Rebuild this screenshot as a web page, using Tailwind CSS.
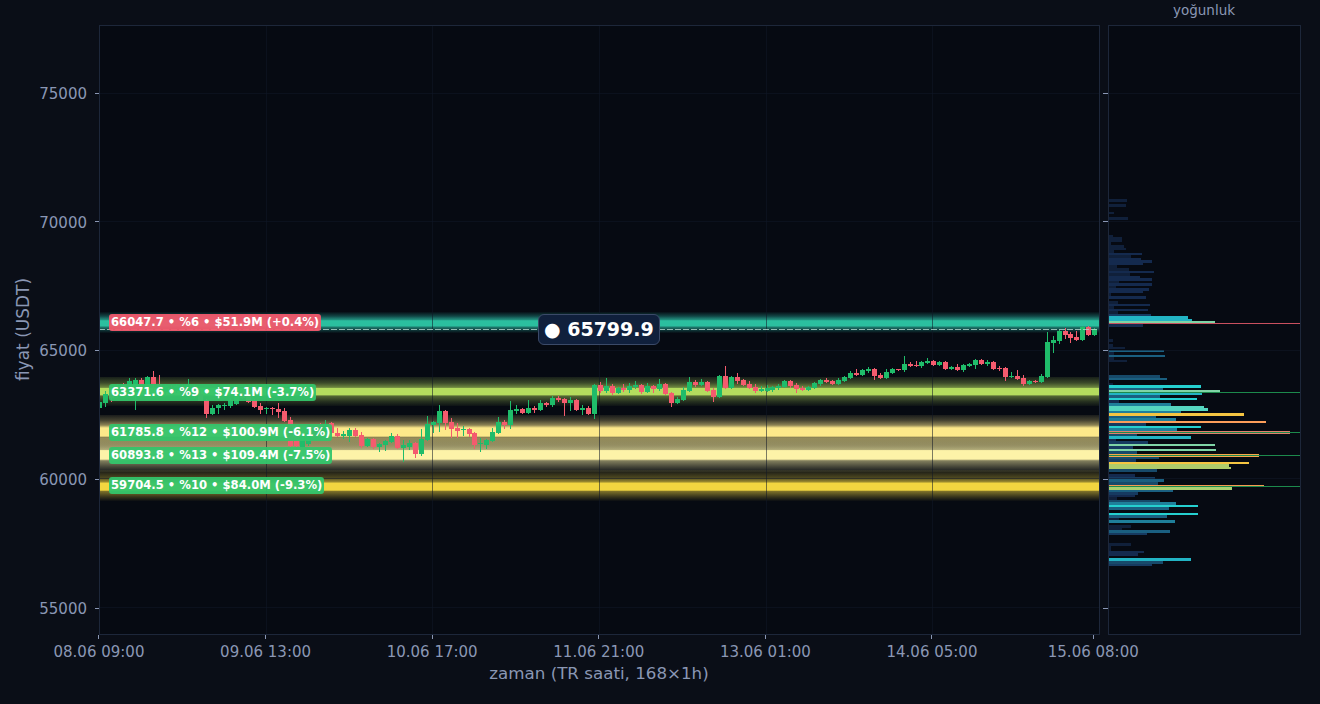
<!DOCTYPE html>
<html lang="tr">
<head>
    <meta charset="UTF-8">
    <title>fiyat yoğunluk</title>
    <script src="https://cdn.jsdelivr.net/npm/@tailwindcss/browser@4"></script>
</head>
<body class="bg-[#0a0e17] font-['DejaVu_Sans',sans-serif] text-[#8a97b4] overflow-hidden">
<div class="w-[1320px] h-[704px] flex flex-col">
    <!-- density title -->
    <div class="h-[25px] pl-[1108px]">
        <div class="w-[192px] text-center text-[13.5px] leading-[21px]">yoğunluk</div>
    </div>

    <div class="flex h-[610px]">
        <!-- y axis -->
        <div class="w-[99px] flex">
            <div class="w-[48px] flex items-center justify-center">
                <span class="-rotate-90 whitespace-nowrap text-[17px] leading-none pl-[2px]">fiyat (USDT)</span>
            </div>
            <div class="w-[51px] pt-[58px] pb-[17px] flex flex-col justify-between items-end">
                <div class="h-5 flex items-center gap-[8px] text-[15px]"><span class="translate-y-px">75000</span><i class="w-[4px] h-px bg-[#8a97b4]"></i></div>
                <div class="h-5 flex items-center gap-[8px] text-[15px]"><span class="translate-y-px">70000</span><i class="w-[4px] h-px bg-[#8a97b4]"></i></div>
                <div class="h-5 flex items-center gap-[8px] text-[15px]"><span class="translate-y-px">65000</span><i class="w-[4px] h-px bg-[#8a97b4]"></i></div>
                <div class="h-5 flex items-center gap-[8px] text-[15px]"><span class="translate-y-px">60000</span><i class="w-[4px] h-px bg-[#8a97b4]"></i></div>
                <div class="h-5 flex items-center gap-[8px] text-[15px]"><span class="translate-y-px">55000</span><i class="w-[4px] h-px bg-[#8a97b4]"></i></div>
            </div>
        </div>

        <!-- price plot -->
        <div class="relative w-[1001px] h-[610px] bg-[#060a12] outline outline-1 -outline-offset-1 outline-[#1d273a]">
            <svg id="plot" class="block" width="1001" height="610" viewBox="99 25 1001 610">
                <defs>
                    <linearGradient id="bandTeal" x1="0" x2="0" y1="0" y2="1">
                        <stop offset="0" stop-color="#2dd4bf" stop-opacity=".03"/>
                        <stop offset=".2" stop-color="#2dd4bf" stop-opacity=".3"/>
                        <stop offset=".36" stop-color="#2dc4a8" stop-opacity=".7"/>
                        <stop offset=".42" stop-color="#2bbf9f"/>
                        <stop offset=".66" stop-color="#2bbf9f"/>
                        <stop offset=".72" stop-color="#2dc4a8" stop-opacity=".6"/>
                        <stop offset=".88" stop-color="#2dd4bf" stop-opacity=".2"/>
                        <stop offset="1" stop-color="#2dd4bf" stop-opacity=".02"/>
                    </linearGradient>
                    <linearGradient id="bandLime" x1="0" x2="0" y1="0" y2="1">
                        <stop offset="0" stop-color="#b4dc5e" stop-opacity=".1"/>
                        <stop offset=".2" stop-color="#b4dc5e" stop-opacity=".3"/>
                        <stop offset=".36" stop-color="#b4dc5e" stop-opacity=".6"/>
                        <stop offset=".38" stop-color="#b4dc5e"/>
                        <stop offset=".62" stop-color="#b4dc5e"/>
                        <stop offset=".65" stop-color="#b4dc5e" stop-opacity=".45"/>
                        <stop offset=".85" stop-color="#b4dc5e" stop-opacity=".18"/>
                        <stop offset="1" stop-color="#b4dc5e" stop-opacity=".04"/>
                    </linearGradient>
                    <linearGradient id="bandPale" x1="0" x2="0" y1="0" y2="1">
                        <stop offset="0" stop-color="#fde98a" stop-opacity=".08"/>
                        <stop offset=".15" stop-color="#fde98a" stop-opacity=".25"/>
                        <stop offset=".29" stop-color="#fde98a" stop-opacity=".55"/>
                        <stop offset=".37" stop-color="#fde98a"/>
                        <stop offset=".6" stop-color="#fde98a"/>
                        <stop offset=".64" stop-color="#fde98a" stop-opacity=".55"/>
                        <stop offset=".85" stop-color="#fde98a" stop-opacity=".35"/>
                        <stop offset="1" stop-color="#fde98a" stop-opacity=".1"/>
                    </linearGradient>
                    <linearGradient id="bandCream" x1="0" x2="0" y1="0" y2="1">
                        <stop offset="0" stop-color="#fdf3a8" stop-opacity=".1"/>
                        <stop offset=".2" stop-color="#fdf3a8" stop-opacity=".35"/>
                        <stop offset=".34" stop-color="#fdf3a8" stop-opacity=".65"/>
                        <stop offset=".37" stop-color="#fdf3a8"/>
                        <stop offset=".62" stop-color="#fdf3a8"/>
                        <stop offset=".67" stop-color="#fdf3a8" stop-opacity=".5"/>
                        <stop offset=".85" stop-color="#fdf3a8" stop-opacity=".25"/>
                        <stop offset="1" stop-color="#fdf3a8" stop-opacity=".06"/>
                    </linearGradient>
                    <linearGradient id="bandGold" x1="0" x2="0" y1="0" y2="1">
                        <stop offset="0" stop-color="#f2d640" stop-opacity=".06"/>
                        <stop offset=".25" stop-color="#f2d640" stop-opacity=".3"/>
                        <stop offset=".39" stop-color="#f2d640" stop-opacity=".65"/>
                        <stop offset=".42" stop-color="#f2d640"/>
                        <stop offset=".65" stop-color="#f2d640"/>
                        <stop offset=".69" stop-color="#f2d640" stop-opacity=".5"/>
                        <stop offset=".87" stop-color="#f2d640" stop-opacity=".2"/>
                        <stop offset="1" stop-color="#f2d640" stop-opacity=".02"/>
                    </linearGradient>
                </defs>
                <!-- liquidity bands -->
                <rect x="99" y="312" width="1001" height="21" fill="url(#bandTeal)"/>
                <rect x="99" y="377" width="1001" height="29" fill="url(#bandLime)"/>
                <rect x="99" y="415" width="1001" height="35" fill="url(#bandPale)"/>
                <rect x="99" y="438" width="1001" height="34" fill="url(#bandCream)"/>
                <rect x="99" y="470" width="1001" height="31" fill="url(#bandGold)"/>
                <g id="grid"></g>
                <g id="candles"></g>
                <line x1="99" x2="1099" y1="329.5" y2="329.5" stroke="#b7d8d0" stroke-opacity=".8" stroke-dasharray="6 2"/>
            </svg>

            <!-- level labels -->
            <div class="absolute left-[10px] top-[289px] px-[2px] rounded-[3px] bg-[#f2596d]/95 text-white text-[11.6px] font-bold leading-[17px] whitespace-nowrap">66047.7 • %6 • $51.9M (+0.4%)</div>
            <div class="absolute left-[10px] top-[358.5px] px-[2px] rounded-[3px] bg-[#33c46c]/95 text-white text-[11.6px] font-bold leading-[17px] whitespace-nowrap">63371.6 • %9 • $74.1M (-3.7%)</div>
            <div class="absolute left-[10px] top-[398.5px] px-[2px] rounded-[3px] bg-[#33c46c]/95 text-white text-[11.6px] font-bold leading-[17px] whitespace-nowrap">61785.8 • %12 • $100.9M (-6.1%)</div>
            <div class="absolute left-[10px] top-[421.5px] px-[2px] rounded-[3px] bg-[#33c46c]/95 text-white text-[11.6px] font-bold leading-[17px] whitespace-nowrap">60893.8 • %13 • $109.4M (-7.5%)</div>
            <div class="absolute left-[10px] top-[452px] px-[2px] rounded-[3px] bg-[#33c46c]/95 text-white text-[11.6px] font-bold leading-[17px] whitespace-nowrap">59704.5 • %10 • $84.0M (-9.3%)</div>

            <!-- last price -->
            <div class="absolute left-[439px] top-[288.5px] h-[31px] px-[5px] flex items-center rounded-[6px] bg-[#10203c] border border-[#3b4a68] text-white text-[19px] font-bold whitespace-nowrap">● 65799.9</div>
        </div>

        <!-- gap with right ticks -->
        <div class="w-[8px] pt-[58px] pb-[17px] flex flex-col justify-between items-end">
            <div class="h-5 flex items-center"><i class="w-[5px] h-px bg-[#8a97b4]"></i></div>
            <div class="h-5 flex items-center"><i class="w-[5px] h-px bg-[#8a97b4]"></i></div>
            <div class="h-5 flex items-center"><i class="w-[5px] h-px bg-[#8a97b4]"></i></div>
            <div class="h-5 flex items-center"><i class="w-[5px] h-px bg-[#8a97b4]"></i></div>
            <div class="h-5 flex items-center"><i class="w-[5px] h-px bg-[#8a97b4]"></i></div>
        </div>

        <!-- density histogram -->
        <div class="w-[193px] h-[610px] bg-[#060a12] outline outline-1 -outline-offset-1 outline-[#1d273a]">
            <svg id="hist" class="block" width="193" height="610" viewBox="1108 25 193 610"></svg>
        </div>
    </div>

    <!-- x axis -->
    <div class="flex pl-[15.7px] text-[15px]">
        <div class="w-[166.6px] flex flex-col items-center"><i class="w-px h-[4px] bg-[#8a97b4]"></i><span class="mt-[3px] leading-[20px]">08.06 09:00</span></div>
        <div class="w-[166.6px] flex flex-col items-center"><i class="w-px h-[4px] bg-[#8a97b4]"></i><span class="mt-[3px] leading-[20px]">09.06 13:00</span></div>
        <div class="w-[166.6px] flex flex-col items-center"><i class="w-px h-[4px] bg-[#8a97b4]"></i><span class="mt-[3px] leading-[20px]">10.06 17:00</span></div>
        <div class="w-[166.6px] flex flex-col items-center"><i class="w-px h-[4px] bg-[#8a97b4]"></i><span class="mt-[3px] leading-[20px]">11.06 21:00</span></div>
        <div class="w-[166.6px] flex flex-col items-center"><i class="w-px h-[4px] bg-[#8a97b4]"></i><span class="mt-[3px] leading-[20px]">13.06 01:00</span></div>
        <div class="w-[166.6px] flex flex-col items-center"><i class="w-px h-[4px] bg-[#8a97b4]"></i><span class="mt-[3px] leading-[20px]">14.06 05:00</span></div>
        <div class="w-[156px] flex flex-col items-center"><i class="w-px h-[4px] bg-[#8a97b4]"></i><span class="mt-[3px] leading-[20px]">15.06 08:00</span></div>
    </div>
    <div class="w-[1198px] text-center text-[16.7px] leading-[20px] mt-[1px]">zaman (TR saati, 168×1h)</div>
</div>

<script>
    // grid
    const gridColor = '#111827';
    let grid = '';
    [93, 221.5, 350, 478.5, 607].forEach(y => {
        grid += `<rect x="99" y="${Math.floor(y)}" width="1001" height="1" fill="${gridColor}" fill-opacity=".55"/>`;
    });
    [266, 432, 599, 766, 932].forEach(x => {
        grid += `<rect x="${x}" y="25" width="1" height="610" fill="${gridColor}" fill-opacity=".55"/>`;
    });
    document.getElementById('grid').innerHTML = grid;

    // candles: colour, body top, body bottom, wick top, wick bottom (px)
    const candles = `g 402 408 401 410|g 394 403 391 407|r 393 398 392 402|g 388 396 384 398|r 385 392 383 395|g 381 390 378 394|g 380 392 378 410|r 380 385 378 392|g 377 388 376 392|r 377 384 371 390|r 384 390 375 394|g 386 392 384 395|r 388 394 385 396|g 386 391 384 393|r 387 393 385 396|g 385 392 379 394|r 388 395 385 398|r 394 401 390 401|r 400 414 399 418|g 408 414 405 415|g 405 408 404 414|g 405 406 403 410|g 400 406 398 408|g 396 404 394 405|r 392 398 390 399|r 395 402 393 403|r 400 407 399 408|r 406 410 403 414|g 408 409 407 414|r 408 409 407 415|r 409 412 403 418|r 411 421 408 422|r 420 446 417 447|r 428 446 426 447|g 436 447 434 448|g 433 444 431 446|r 428 436 426 438|r 425 434 423 436|g 424 432 420 434|r 423 433 422 434|r 433 436 428 437|g 434 436 431 439|g 430 436 428 442|r 430 436 428 437|r 435 446 432 448|g 439 446 438 447|r 439 447 438 449|g 444 447 443 452|g 441 445 440 451|g 436 442 433 443|r 436 448 434 449|g 445 448 440 462|g 443 447 440 450|r 443 454 442 458|g 439 454 429 456|g 424 440 416 441|g 422 425 421 433|g 411 423 405 432|r 411 423 410 430|r 422 429 418 438|r 428 431 423 438|g 429 430 426 436|r 429 434 428 437|r 433 445 432 449|g 443 444 438 452|g 440 445 439 449|g 432 441 428 442|g 422 433 417 434|r 422 425 420 429|g 410 425 401 429|g 409 411 405 414|r 409 413 408 414|g 408 413 400 414|r 408 410 406 413|g 403 410 400 411|r 403 405 402 407|g 398 405 396 407|r 398 400 396 402|r 399 403 398 416|g 400 403 397 411|r 400 410 399 411|g 408 410 405 415|r 408 414 406 415|g 385 414 384 419|r 385 391 382 393|g 386 391 378 393|r 386 393 384 395|g 388 393 387 394|r 388 390 384 392|g 386 390 383 393|g 385 387 381 389|r 385 392 384 394|g 386 392 383 393|r 386 389 385 393|g 384 389 379 391|r 384 394 383 395|r 393 403 392 407|g 399 403 397 404|g 390 400 387 401|g 382 391 377 392|r 382 385 380 387|g 382 385 379 386|r 382 391 381 392|r 390 397 388 402|g 376 397 375 398|r 376 388 366 389|g 377 388 376 389|r 377 381 373 384|r 380 385 379 386|r 384 388 381 389|r 387 391 384 393|g 389 391 386 392|g 388 391 385 392|g 387 390 386 392|g 386 388 384 390|g 381 387 380 388|r 381 386 380 388|r 385 389 383 393|r 388 390 386 391|g 387 390 386 391|g 383 388 382 389|g 380 384 379 386|r 380 382 378 383|r 381 384 380 385|g 380 384 378 385|g 377 381 376 382|g 373 378 371 379|r 373 375 369 376|g 370 375 369 376|g 369 371 367 373|r 369 376 368 380|r 375 378 373 379|g 372 378 369 379|g 369 373 368 374|r 369 370 369 371|g 364 370 356 372|r 364 366 362 367|r 365 366 361 367|g 362 366 361 368|g 361 363 358 364|r 361 365 360 366|g 362 365 361 366|r 362 369 361 370|g 367 369 366 370|r 367 370 364 371|g 365 370 364 372|g 364 366 363 367|g 360 365 359 369|r 360 364 359 365|g 362 364 360 366|r 362 369 361 370|r 368 369 366 371|r 368 377 367 381|g 376 377 372 378|r 376 379 370 380|r 378 384 375 386|g 381 384 380 385|r 381 382 380 383|g 376 382 374 383|g 342 377 332 378|g 340 343 336 353|g 331 341 330 344|r 331 335 328 339|r 334 338 332 343|r 337 340 331 341|g 327 340 326 341|r 327 335 326 336|g 329 335 328 336`.split('|');

    const colors = { g: '#1fbc6a', r: '#f45b6e' };
    let candleSvg = '';
    candles.forEach((c, i) => {
        const [k, top, bot, hi, lo] = c.split(' ');
        const x = Math.round(99 + i * 5.96);
        candleSvg += `<rect x="${x}" y="${hi}" width="1" height="${lo - hi}" fill="${colors[k]}"/>`;
        candleSvg += `<rect x="${x - 2}" y="${top}" width="5" height="${bot - top}" fill="${colors[k]}"/>`;
    });
    document.getElementById('candles').innerHTML = candleSvg;

    // density bars: y, height, width, colour
    const n1 = '#10203a', n2 = '#142a4e', n3 = '#163a60', b1 = '#174a6a', b2 = '#1a5f80', b3 = '#1f7f9a';
    const c1 = '#22b4c4', c2 = '#25d0d0', t1 = '#55d6c0', t2 = '#7fd4a6', l1 = '#b0cc6a', y1 = '#f5c542', o1 = '#fb9e5a';
    const bars = [
        [199,3,19,n1],[204,3,18,n1],[212,2,6,n1],[217,3,20,n1],[235,2,5,n1],[237,5,14,n1],[242,3,3,n1],[245,3,16,n1],
        [248,2,18,n1],[250,3,6,n1],[253,2,34,n2],[255,3,23,n1],[258,2,33,n2],[260,3,44,n2],[263,2,35,n2],[265,3,9,n1],
        [268,3,21,n1],[271,2,46,n2],[273,3,22,n1],[276,2,32,n2],[278,3,44,n2],[281,2,11,n1],[283,3,44,n2],[286,2,8,n1],
        [288,3,41,n2],[291,2,35,n2],[293,3,3,n1],[296,3,38,n2],[301,3,10,n1],[304,2,42,n2],[306,3,6,n1],[309,2,40,n2],
        [311,3,10,n1],[314,2,43,n3],[316,3,80,c1],[319,2,84,c1],[321,2,107,t2],[324,3,35,n2],
        [339,3,5,n1],[344,3,5,n1],[347,2,17,n1],[350,2,56,b2],[352,3,6,n1],[355,2,57,b2],[357,3,6,n1],[360,2,19,n1],
        [375,3,52,b1],[378,2,59,b2],[383,2,5,n1],[385,3,93,c2],[388,2,55,b2],[390,3,112,t2],[393,2,94,c1],[395,3,52,b2],
        [398,2,89,c2],[400,3,11,n2],[403,3,63,b3],[406,2,96,t1],[408,3,100,t1],[411,2,73,b3],[413,3,136,y1],[416,2,48,b2],
        [418,3,68,b3],[421,2,158,o1],[423,3,38,n3],[426,2,93,c2],[428,3,69,b3],[431,3,182,'#e0806a'],[434,2,29,b1],[436,3,83,c1],
        [439,2,8,n2],[441,3,40,n3],[444,2,107,t2],[446,3,25,n3],[449,2,108,t2],[451,3,29,b1],[454,3,151,'#f5a84a'],[457,2,51,b1],
        [459,3,28,n3],[462,2,141,y1],[464,3,121,l1],[467,2,123,l1],[469,3,49,b1],[474,3,27,n2],[477,2,47,n3],[479,3,56,b2],
        [482,3,50,b1],[485,2,156,'#f59a50'],[487,3,124,'#a9d070'],[490,2,65,b2],[492,3,30,n3],[495,2,27,n2],[497,3,9,n1],
        [500,2,52,b1],[502,3,68,b3],[505,2,90,c2],[507,3,61,b2],[513,2,90,c2],[515,3,59,b2],[518,2,11,n1],[520,3,67,b3],
        [525,3,23,n1],[528,2,14,n1],[530,3,62,b2],[533,2,39,n3],[543,3,23,n1],[546,5,3,n1],[551,2,36,n2],[553,3,30,n2],
        [558,3,83,c1],[561,3,55,b1],[564,2,44,n3]
    ];
    let histSvg = '';
    bars.forEach(([y, h, w, col]) => {
        histSvg += `<rect x="1108" y="${y}" width="${w}" height="${h}" fill="${col}"/>`;
    });
    // level lines
    histSvg += `<rect x="1108" y="323" width="192" height="1" fill="#c9505f"/>`;
    [392, 432, 455, 486].forEach(y => {
        histSvg += `<rect x="1108" y="${y}" width="192" height="1" fill="#1c8a4c"/>`;
    });
    [93, 221.5, 350, 478.5, 607].forEach(y => {
        histSvg += `<rect x="1108" y="${Math.floor(y)}" width="192" height="1" fill="#111a2a" fill-opacity=".5"/>`;
    });
    document.getElementById('hist').innerHTML = histSvg;
</script>
</body>
</html>
